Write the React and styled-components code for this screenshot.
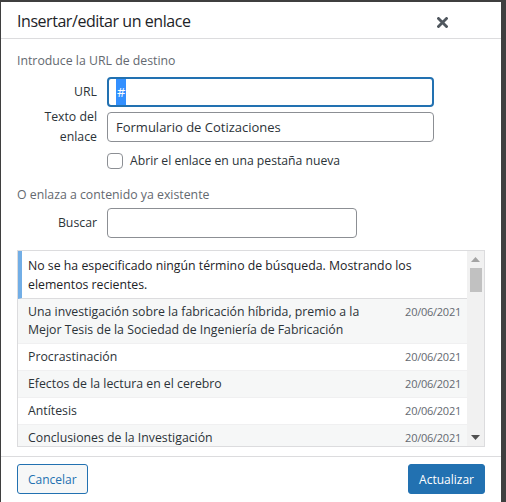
import React from "react";
import styled, { createGlobalStyle } from "styled-components";

const Global = createGlobalStyle`
  html, body { margin: 0; padding: 0; }
  body {
    background: #3f3f3f;
    font-family: "Open Sans", "Noto Sans", sans-serif;
    width: 506px;
    height: 502px;
    overflow: hidden;
  }
  * { box-sizing: border-box; }
`;

const Dialog = styled.div`
  margin: 2px 0 0 1px;
  width: 500px;
  height: 500px;
  background: #fff;
  display: flex;
  flex-direction: column;
`;

const Header = styled.div`
  height: 37px;
  flex: none;
  border-bottom: 1px solid #dcdcde;
  display: flex;
  align-items: center;
  justify-content: space-between;
  padding: 2px 53px 0 16px;
`;

const Title = styled.h1`
  margin: 0;
  font-size: 16px;
  letter-spacing: -0.45px;
  line-height: 22px;
  font-weight: 400;
  color: #1d2327;
`;

const Close = styled.button`
  border: 0;
  background: none;
  padding: 0;
  width: 11px;
  height: 11px;
  display: flex;
  margin-top: 2px;
`;

const Body = styled.div`
  padding: 0 16px;
  display: flex;
  flex-direction: column;
  flex: none;
`;

const Heading = styled.p`
  margin: ${(p) => p.$top}px 0 0;
  font-size: 12.3px;
  line-height: 18px;
  color: #646970;
`;

const Row = styled.div`
  display: flex;
  align-items: center;
  margin-top: ${(p) => p.$top}px;
  gap: 10px;
`;

const Label = styled.label`
  width: 80px;
  flex: none;
  text-align: right;
  font-size: 12.3px;
  line-height: 20px;
  color: #2c3338;
`;

const Field = styled.div`
  width: ${(p) => p.$w}px;
  height: 30px;
  border: 1px solid #8c8f94;
  border-radius: 4px;
  display: flex;
  align-items: center;
  padding: 0 8px;
  font-size: 13px;
  color: #2c3338;
  ${(p) =>
    p.$focus &&
    `border: 2px solid #2271b1; padding: 0 7px; align-items: stretch;`}
`;

const Selection = styled.span`
  background: #3390ff;
  color: #fff;
  font-size: 13px;
  display: flex;
  align-items: center;
  padding: 0 1px;
`;

const Check = styled.span`
  width: 16px;
  height: 16px;
  border: 1px solid #8c8f94;
  border-radius: 4px;
  flex: none;
  margin-left: 90px;
`;

const CheckText = styled.span`
  font-size: 12.2px;
  line-height: 18px;
  color: #2c3338;
  margin-left: -3px;
`;

const Results = styled.div`
  margin-top: 12px;
  height: 197px;
  flex: none;
  border: 1px solid #dcdcde;
  display: flex;
  overflow: hidden;
`;

const List = styled.div`
  flex: 1;
  min-width: 0;
  display: flex;
  flex-direction: column;
`;

const Notice = styled.div`
  border-left: 4px solid #72aee6;
  padding: 5px 10px 4px 6px;
  font-size: 12.3px;
  line-height: 19px;
  color: #1d2327;
  border-bottom: 1px solid #dcdcde;
  flex: none;
`;

const Item = styled.div`
  flex: none;
  display: flex;
  justify-content: space-between;
  align-items: flex-start;
  gap: 20px;
  padding: 4px 6px 4px 10px;
  background: ${(p) => (p.$alt ? "#f6f7f7" : "#fff")};
  border-bottom: 1px solid #f0f0f1;
  font-size: 12.3px;
  line-height: 18px;
  color: #2c3338;
`;

const ItemTitle = styled.span`
  flex: 1;
`;

const ItemDate = styled.span`
  font-size: 11px;
  letter-spacing: -0.25px;
  color: #646970;
  flex: none;
  line-height: 18px;
`;

const Scrollbar = styled.div`
  width: 17px;
  flex: none;
  background: #f1f1f1;
  display: flex;
  flex-direction: column;
  align-items: center;
`;

const Arrow = styled.div`
  width: 17px;
  height: 17px;
  display: flex;
  align-items: center;
  justify-content: center;
`;

const Thumb = styled.div`
  width: 12px;
  height: 24px;
  background: #c1c1c1;
`;

const Spacer = styled.div`
  flex: 1;
`;

const Footer = styled.div`
  flex: none;
  margin-top: 9px;
  border-top: 1px solid #dcdcde;
  padding: 7px 16px 0;
  display: flex;
  justify-content: space-between;
`;

const Button = styled.button`
  height: 30px;
  padding: 0 10px;
  border-radius: 3px;
  font-family: inherit;
  font-size: 12px;
  border: 1px solid #2271b1;
  background: ${(p) => (p.$primary ? "#2271b1" : "#f6f7f7")};
  color: ${(p) => (p.$primary ? "#fff" : "#2271b1")};
`;

const items = [
  "Una investigación sobre la fabricación híbrida, premio a la Mejor Tesis de la Sociedad de Ingeniería de Fabricación",
  "Procrastinación",
  "Efectos de la lectura en el cerebro",
  "Antítesis",
  "Conclusiones de la Investigación",
];

export default function App() {
  return (
    <>
      <Global />
      <Dialog>
        <Header>
          <Title>Insertar/editar un enlace</Title>
          <Close aria-label="Cerrar">
            <svg width="11" height="11" viewBox="0 0 11 11">
              <path d="M1.5 1.5 L9.5 9.5 M9.5 1.5 L1.5 9.5" stroke="#50575e" strokeWidth="2.8" strokeLinecap="square" />
            </svg>
          </Close>
        </Header>
        <Body>
          <Heading $top={13}>Introduce la URL de destino</Heading>
          <Row $top={7}>
            <Label>URL</Label>
            <Field $w={327} $focus>
              <Selection>#</Selection>
            </Field>
          </Row>
          <Row $top={0}>
            <Label>Texto del enlace</Label>
            <Field $w={327}>Formulario de Cotizaciones</Field>
          </Row>
          <Row $top={5}>
            <Check />
            <CheckText>Abrir el enlace en una pestaña nueva</CheckText>
          </Row>
          <Heading $top={16}>O enlaza a contenido ya existente</Heading>
          <Row $top={4}>
            <Label>Buscar</Label>
            <Field $w={250} />
          </Row>
          <Results>
            <List>
              <Notice>
                No se ha especificado ningún término de búsqueda. Mostrando los elementos recientes.
              </Notice>
              {items.map((t, i) => (
                <Item key={t} $alt={i % 2 === 0}>
                  <ItemTitle>{t}</ItemTitle>
                  <ItemDate>20/06/2021</ItemDate>
                </Item>
              ))}
            </List>
            <Scrollbar>
              <Arrow>
                <svg width="9" height="5" viewBox="0 0 9 5"><path d="M0 5 L4.5 0 L9 5 Z" fill="#a3a3a3" /></svg>
              </Arrow>
              <Thumb />
              <Spacer />
              <Arrow>
                <svg width="9" height="5" viewBox="0 0 9 5"><path d="M0 0 L4.5 5 L9 0 Z" fill="#505050" /></svg>
              </Arrow>
            </Scrollbar>
          </Results>
        </Body>
        <Footer>
          <Button>Cancelar</Button>
          <Button $primary>Actualizar</Button>
        </Footer>
      </Dialog>
    </>
  );
}
